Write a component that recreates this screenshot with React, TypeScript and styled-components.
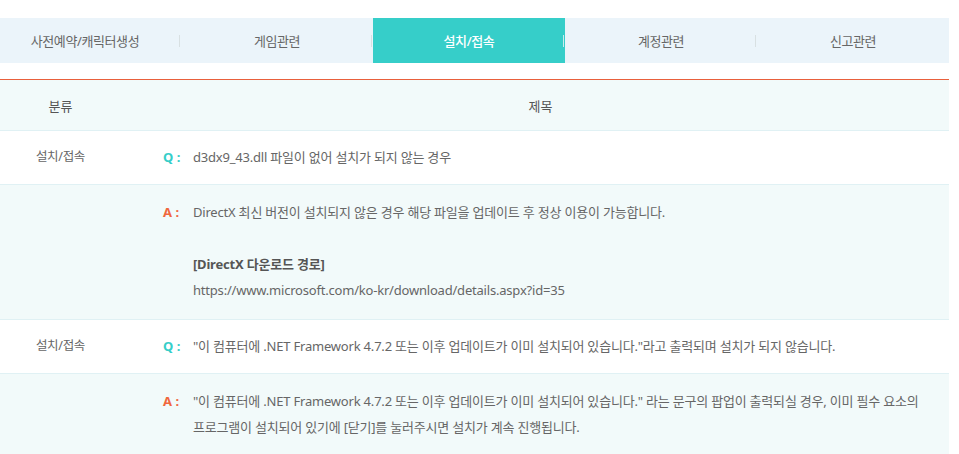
import React from "react";
import styled, { createGlobalStyle } from "styled-components";

const GlobalStyle = createGlobalStyle`
  html, body {
    margin: 0;
    padding: 0;
    background: #ffffff;
  }
  body {
    font-family: "Noto Sans", "Noto Sans CJK KR", sans-serif;
    color: #666666;
    overflow: hidden;
  }
`;

const Page = styled.div`
  width: 960px;
  margin-left: -11px;
  padding-top: 18px;
`;

const TabBar = styled.ul`
  display: flex;
  margin: 0;
  padding: 0;
  list-style: none;
  height: 45px;
  background: #ebf4fa;
`;

const Tab = styled.li<{ $active?: boolean; $last?: boolean }>`
  position: relative;
  flex: 1 1 0;
  display: flex;
  align-items: center;
  justify-content: center;
  font-size: 13px;
  letter-spacing: -0.4px;
  color: ${(p) => (p.$active ? "#ffffff" : "#666666")};
  font-weight: ${(p) => (p.$active ? 500 : 400)};
  background: ${(p) => (p.$active ? "#36cec9" : "transparent")};

  &::after {
    content: "";
    display: ${(p) => (p.$last ? "none" : "block")};
    position: absolute;
    right: 1px;
    top: 17px;
    width: 1px;
    height: 12px;
    background: ${(p) => (p.$active ? "#c9ecec" : "#d8e0e2")};
  }
`;

const Table = styled.div`
  margin-top: 16px;
  border-top: 1px solid #e9603c;
`;

const Row = styled.div<{ $tint?: boolean }>`
  display: grid;
  grid-template-columns: 143px 1fr;
  background: ${(p) => (p.$tint ? "#f2fafa" : "#ffffff")};
  border-bottom: 1px solid #e0f1f4;
`;

const HeadCell = styled.div`
  height: 50px;
  display: flex;
  align-items: center;
  justify-content: center;
  font-size: 13px;
  color: #555555;
`;

const CategoryCell = styled.div`
  text-align: center;
  font-size: 12.5px;
  line-height: 26px;
  padding-top: 13px;
  letter-spacing: -0.3px;
`;

const ContentCell = styled.div<{ $answer?: boolean }>`
  display: flex;
  padding: ${(p) => (p.$answer ? "14px 28px 16px 31px" : "13px 28px 14px 31px")};
  font-size: 13px;
  line-height: 26px;
  letter-spacing: -0.2px;
  word-break: keep-all;
`;

const Mark = styled.span<{ $kind: "q" | "a" }>`
  flex: 0 0 30px;
  font-weight: 700;
  font-size: 13px;
  letter-spacing: 0;
  color: ${(p) => (p.$kind === "q" ? "#36cec9" : "#f0673d")};
`;

const Body = styled.div`
  flex: 1 1 auto;
  min-width: 0;
`;

const Line = styled.p`
  margin: 0;
  min-height: 26px;
`;

const Strong = styled.strong`
  font-weight: 700;
  color: #555555;
`;

const tabs = ["사전예약/캐릭터생성", "게임관련", "설치/접속", "계정관련", "신고관련"];

export default function App() {
  return (
    <>
      <GlobalStyle />
      <Page>
        <TabBar>
          {tabs.map((t, i) => (
            <Tab key={t} $active={i === 2} $last={i === tabs.length - 1}>
              {t}
            </Tab>
          ))}
        </TabBar>
        <Table>
          <Row $tint>
            <HeadCell>분류</HeadCell>
            <HeadCell>제목</HeadCell>
          </Row>
          <Row>
            <CategoryCell>설치/접속</CategoryCell>
            <ContentCell>
              <Mark $kind="q">Q :</Mark>
              <Body>d3dx9_43.dll 파일이 없어 설치가 되지 않는 경우</Body>
            </ContentCell>
          </Row>
          <Row $tint>
            <CategoryCell />
            <ContentCell $answer>
              <Mark $kind="a">A :</Mark>
              <Body>
                <Line>DirectX 최신 버전이 설치되지 않은 경우 해당 파일을 업데이트 후 정상 이용이 가능합니다.</Line>
                <Line />
                <Line>
                  <Strong>[DirectX 다운로드 경로]</Strong>
                </Line>
                <Line>https://www.microsoft.com/ko-kr/download/details.aspx?id=35</Line>
              </Body>
            </ContentCell>
          </Row>
          <Row>
            <CategoryCell>설치/접속</CategoryCell>
            <ContentCell>
              <Mark $kind="q">Q :</Mark>
              <Body>
                "이 컴퓨터에 .NET Framework 4.7.2 또는 이후 업데이트가 이미 설치되어 있습니다."라고 출력되며 설치가 되지 않습니다.
              </Body>
            </ContentCell>
          </Row>
          <Row $tint>
            <CategoryCell />
            <ContentCell $answer>
              <Mark $kind="a">A :</Mark>
              <Body>
                "이 컴퓨터에 .NET Framework 4.7.2 또는 이후 업데이트가 이미 설치되어 있습니다." 라는 문구의 팝업이 출력되실 경우, 이미 필수 요소의 프로그램이 설치되어 있기에 [닫기]를 눌러주시면 설치가 계속 진행됩니다.
              </Body>
            </ContentCell>
          </Row>
        </Table>
      </Page>
    </>
  );
}
